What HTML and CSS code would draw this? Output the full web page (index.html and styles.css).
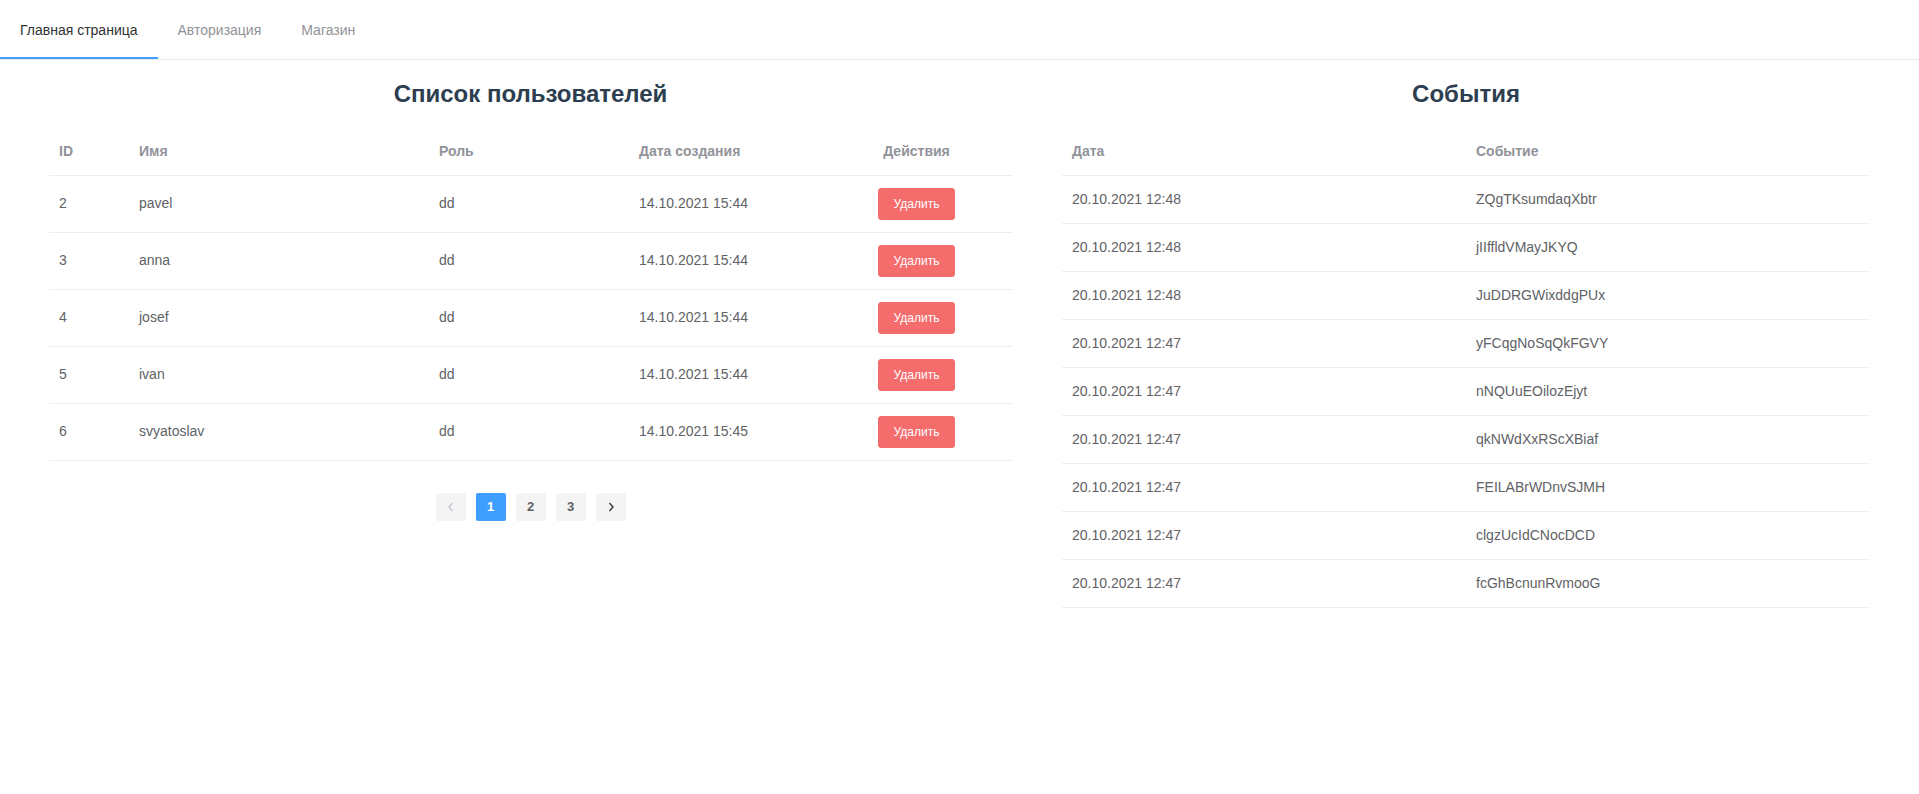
FILE: index.html
```html
<!DOCTYPE html>
<html lang="ru">
<head>
<meta charset="utf-8">
<title>Главная страница</title>
<link rel="stylesheet" href="styles.css">
</head>
<body>
<nav class="tabs">
  <a class="tab active">Главная страница</a>
  <a class="tab">Авторизация</a>
  <a class="tab">Магазин</a>
</nav>
<main class="page">
  <section class="panel panel-users">
    <h2 class="title">Список пользователей</h2>
    <table class="table">
      <colgroup>
        <col class="c-id"><col class="c-name"><col class="c-role"><col class="c-date"><col>
      </colgroup>
      <thead>
        <tr><th>ID</th><th>Имя</th><th>Роль</th><th>Дата создания</th><th class="center">Действия</th></tr>
      </thead>
      <tbody>
        <tr><td>2</td><td>pavel</td><td>dd</td><td>14.10.2021 15:44</td><td class="center"><button class="btn-danger">Удалить</button></td></tr>
        <tr><td>3</td><td>anna</td><td>dd</td><td>14.10.2021 15:44</td><td class="center"><button class="btn-danger">Удалить</button></td></tr>
        <tr><td>4</td><td>josef</td><td>dd</td><td>14.10.2021 15:44</td><td class="center"><button class="btn-danger">Удалить</button></td></tr>
        <tr><td>5</td><td>ivan</td><td>dd</td><td>14.10.2021 15:44</td><td class="center"><button class="btn-danger">Удалить</button></td></tr>
        <tr><td>6</td><td>svyatoslav</td><td>dd</td><td>14.10.2021 15:45</td><td class="center"><button class="btn-danger">Удалить</button></td></tr>
      </tbody>
    </table>
    <div class="pagination">
      <button class="pg pg-arrow disabled" aria-label="prev"><svg width="8" height="10" viewBox="0 0 8 10"><polyline points="5.5,1 2,5 5.5,9" fill="none" stroke="currentColor" stroke-width="1.3"/></svg></button>
      <button class="pg active">1</button>
      <button class="pg">2</button>
      <button class="pg">3</button>
      <button class="pg pg-arrow" aria-label="next"><svg width="8" height="10" viewBox="0 0 8 10"><polyline points="2.5,1 6,5 2.5,9" fill="none" stroke="currentColor" stroke-width="1.3"/></svg></button>
    </div>
  </section>
  <section class="panel panel-events">
    <h2 class="title">События</h2>
    <table class="table">
      <colgroup><col class="c-half"><col></colgroup>
      <thead>
        <tr><th>Дата</th><th>Событие</th></tr>
      </thead>
      <tbody>
        <tr><td>20.10.2021 12:48</td><td>ZQgTKsumdaqXbtr</td></tr>
        <tr><td>20.10.2021 12:48</td><td>jIIffldVMayJKYQ</td></tr>
        <tr><td>20.10.2021 12:48</td><td>JuDDRGWixddgPUx</td></tr>
        <tr><td>20.10.2021 12:47</td><td>yFCqgNoSqQkFGVY</td></tr>
        <tr><td>20.10.2021 12:47</td><td>nNQUuEOilozEjyt</td></tr>
        <tr><td>20.10.2021 12:47</td><td>qkNWdXxRScXBiaf</td></tr>
        <tr><td>20.10.2021 12:47</td><td>FEILABrWDnvSJMH</td></tr>
        <tr><td>20.10.2021 12:47</td><td>clgzUcIdCNocDCD</td></tr>
        <tr><td>20.10.2021 12:47</td><td>fcGhBcnunRvmooG</td></tr>
      </tbody>
    </table>
  </section>
</main>
</body>
</html>
```

FILE: styles.css
```css
* { box-sizing: border-box; }

html, body {
  margin: 0;
  padding: 0;
  background: #ffffff;
}

body {
  font-family: "Liberation Sans", Arial, Helvetica, sans-serif;
  font-size: 14px;
  color: #606266;
}

.tabs {
  display: flex;
  padding-top: 10px;
  border-bottom: 1px solid #e4e7ed;
}

.tab {
  display: block;
  height: 49px;
  padding: 0 20px;
  line-height: 40px;
  font-size: 14px;
  color: #909399;
  border-bottom: 2px solid transparent;
  cursor: pointer;
}

.tab.active {
  color: #303133;
  border-bottom-color: #409eff;
}

.page {
  display: flex;
  gap: 50px;
  padding: 0 49px;
}

.panel-users {
  flex: 0 0 963px;
}

.panel-events {
  flex: 1 1 auto;
}

.title {
  margin: 20px 0;
  font-size: 24px;
  line-height: 27.6px;
  font-weight: bold;
  text-align: center;
  color: #2c3e50;
}

.table {
  width: 100%;
  border-collapse: collapse;
  table-layout: fixed;
}

.c-id { width: 80px; }
.c-name { width: 300px; }
.c-role { width: 200px; }
.c-date { width: 192px; }
.c-half { width: 50%; }

.table th,
.table td {
  padding: 12px 10px;
  line-height: 23px;
  text-align: left;
  vertical-align: middle;
  border-bottom: 1px solid #ebeef5;
  white-space: nowrap;
}

.table th {
  color: #909399;
  font-weight: bold;
}

.table td {
  color: #606266;
}

.table .center {
  text-align: center;
}

.btn-danger {
  display: inline-block;
  height: 32px;
  padding: 0 15px;
  border: 1px solid #f56c6c;
  border-radius: 3px;
  background: #f56c6c;
  color: #ffffff;
  font-family: inherit;
  font-size: 12px;
  line-height: 30px;
  vertical-align: middle;
  cursor: pointer;
}

.pagination {
  display: flex;
  justify-content: center;
  gap: 10px;
  margin-top: 30px;
  padding: 2px 5px;
}

.pg {
  display: flex;
  align-items: center;
  justify-content: center;
  width: 30px;
  height: 28px;
  padding: 0;
  border: none;
  border-radius: 2px;
  background: #f4f4f5;
  color: #606266;
  font-family: inherit;
  font-size: 13px;
  font-weight: bold;
  cursor: pointer;
}

.pg.active {
  background: #409eff;
  color: #ffffff;
}

.pg-arrow {
  color: #303133;
}

.pg-arrow.disabled {
  color: #c0c4cc;
}
```
